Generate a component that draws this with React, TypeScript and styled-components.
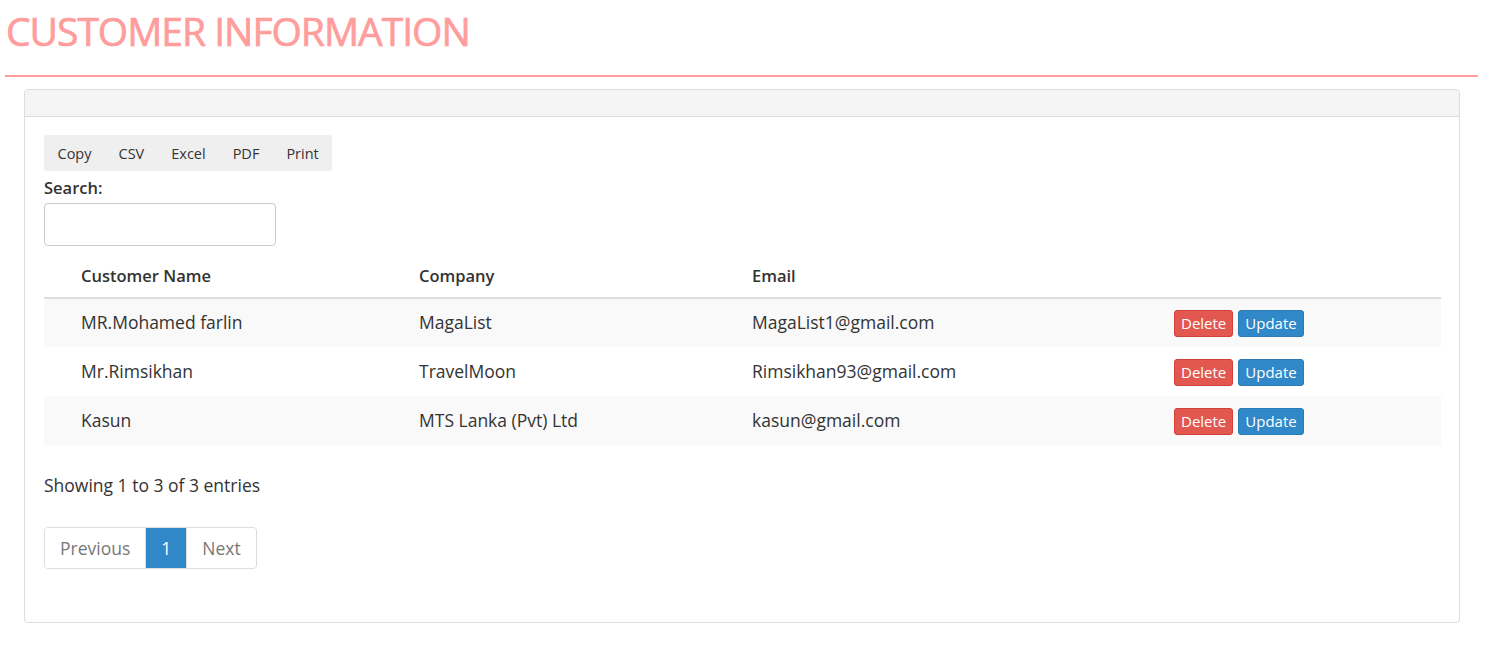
import React from "react";
import styled, { createGlobalStyle } from "styled-components";

const Global = createGlobalStyle`
  html, body { margin: 0; padding: 0; background: #fff; }
  body { font-family: "Open Sans", "Liberation Sans", sans-serif; color: #333; }
  * { box-sizing: border-box; }
`;

const Page = styled.div`
  padding: 0 13px 0 5px;
`;

const Title = styled.h1`
  margin: 0;
  padding: 8px 0 0 1px;
  font-size: 39px;
  line-height: 46px;
  font-weight: 400;
  color: #ff9c9c;
  letter-spacing: -1px;
  -webkit-text-stroke: 0.7px #ff9c9c;
`;

const Rule = styled.hr`
  margin: 21px 0 0 0;
  border: 0;
  border-top: 2px solid #ff9c9c;
`;

const Panel = styled.section`
  margin: 12px 0 0 19px;
  width: 1436px;
  border: 1px solid #ddd;
  border-radius: 4px;
  overflow: hidden;
`;

const PanelHeader = styled.div`
  height: 27px;
  background: #f5f5f5;
  border-bottom: 1px solid #ddd;
`;

const PanelBody = styled.div`
  padding: 18px 18px 53px 19px;
`;

const ButtonGroup = styled.div`
  display: inline-flex;
  background: #efefef;
  border-radius: 3px;
  height: 36px;
  align-items: center;
`;

const ExportButton = styled.button`
  background: transparent;
  border: 0;
  font-family: inherit;
  font-size: 14.5px;
  color: #333;
  padding: 0 13.5px;
  height: 36px;
  cursor: pointer;
`;

const SearchLabel = styled.label`
  display: block;
  font-size: 16.5px;
  font-weight: 600;
  line-height: 22px;
  margin-top: 6px;
`;

const SearchInput = styled.input`
  display: block;
  margin-top: 4px;
  width: 232px;
  height: 43px;
  border: 1px solid #ccc;
  border-radius: 4px;
  font-family: inherit;
  font-size: 16px;
  padding: 0 10px;
`;

const Table = styled.table`
  margin-top: 4px;
  width: 1397px;
  border-collapse: collapse;
  font-size: 17.5px;
`;

const Th = styled.th<{ $w?: number }>`
  text-align: left;
  font-weight: 600;
  font-size: 16.5px;
  padding: 13px 0 9px 37px;
  line-height: 25px;
  border-bottom: 2px solid #ddd;
  width: ${(p) => (p.$w ? `${p.$w}px` : "auto")};
`;

const Tr = styled.tr<{ $striped?: boolean }>`
  background: ${(p) => (p.$striped ? "#f9f9f9" : "#fff")};
  & + & td {
    border-top: 1px solid #ddd;
  }
`;

const Td = styled.td`
  padding: 0 0 2px 37px;
  height: 49px;
  line-height: 24px;
  vertical-align: middle;
  font-weight: 400;
`;

const ActionCell = styled.div`
  display: flex;
  gap: 5px;
  padding-top: 3px;
`;

const ActionButton = styled.button<{ $variant: "danger" | "primary" }>`
  font-family: inherit;
  font-size: 15px;
  line-height: 21px;
  height: 27px;
  color: #fff;
  border-radius: 3px;
  padding: 0 6px;
  border: 1px solid ${(p) => (p.$variant === "danger" ? "#d43f3a" : "#2a7ab5")};
  background: ${(p) => (p.$variant === "danger" ? "#e2574f" : "#3088c8")};
  cursor: pointer;
`;

const Info = styled.div`
  margin-top: 28px;
  font-size: 17.5px;
  line-height: 25px;
`;

const Pagination = styled.div`
  display: inline-flex;
  margin-top: 29px;
  border: 1px solid #ddd;
  border-radius: 4px;
  overflow: hidden;
  height: 42px;
`;

const PageItem = styled.span<{ $active?: boolean }>`
  display: flex;
  align-items: center;
  font-size: 17.5px;
  padding: 0 15px;
  color: ${(p) => (p.$active ? "#fff" : "#777")};
  background: ${(p) => (p.$active ? "#3088c8" : "#fff")};
  & + & {
    border-left: 1px solid #ddd;
  }
`;

const rows = [
  { name: "MR.Mohamed farlin", company: "MagaList", email: "MagaList1@gmail.com" },
  { name: "Mr.Rimsikhan", company: "TravelMoon", email: "Rimsikhan93@gmail.com" },
  { name: "Kasun", company: "MTS Lanka (Pvt) Ltd", email: "kasun@gmail.com" },
];

export default function App() {
  return (
    <Page>
      <Global />
      <Title>CUSTOMER INFORMATION</Title>
      <Rule />
      <Panel>
        <PanelHeader />
        <PanelBody>
          <ButtonGroup>
            {["Copy", "CSV", "Excel", "PDF", "Print"].map((b) => (
              <ExportButton key={b}>{b}</ExportButton>
            ))}
          </ButtonGroup>
          <SearchLabel>Search:</SearchLabel>
          <SearchInput type="text" />
          <Table>
            <thead>
              <tr>
                <Th $w={338}>Customer Name</Th>
                <Th $w={333}>Company</Th>
                <Th $w={422}>Email</Th>
                <Th />
              </tr>
            </thead>
            <tbody>
              {rows.map((r, i) => (
                <Tr key={r.name} $striped={i % 2 === 0}>
                  <Td>{r.name}</Td>
                  <Td>{r.company}</Td>
                  <Td>{r.email}</Td>
                  <Td>
                    <ActionCell>
                      <ActionButton $variant="danger">Delete</ActionButton>
                      <ActionButton $variant="primary">Update</ActionButton>
                    </ActionCell>
                  </Td>
                </Tr>
              ))}
            </tbody>
          </Table>
          <Info>Showing 1 to 3 of 3 entries</Info>
          <Pagination>
            <PageItem>Previous</PageItem>
            <PageItem $active>1</PageItem>
            <PageItem>Next</PageItem>
          </Pagination>
        </PanelBody>
      </Panel>
    </Page>
  );
}
